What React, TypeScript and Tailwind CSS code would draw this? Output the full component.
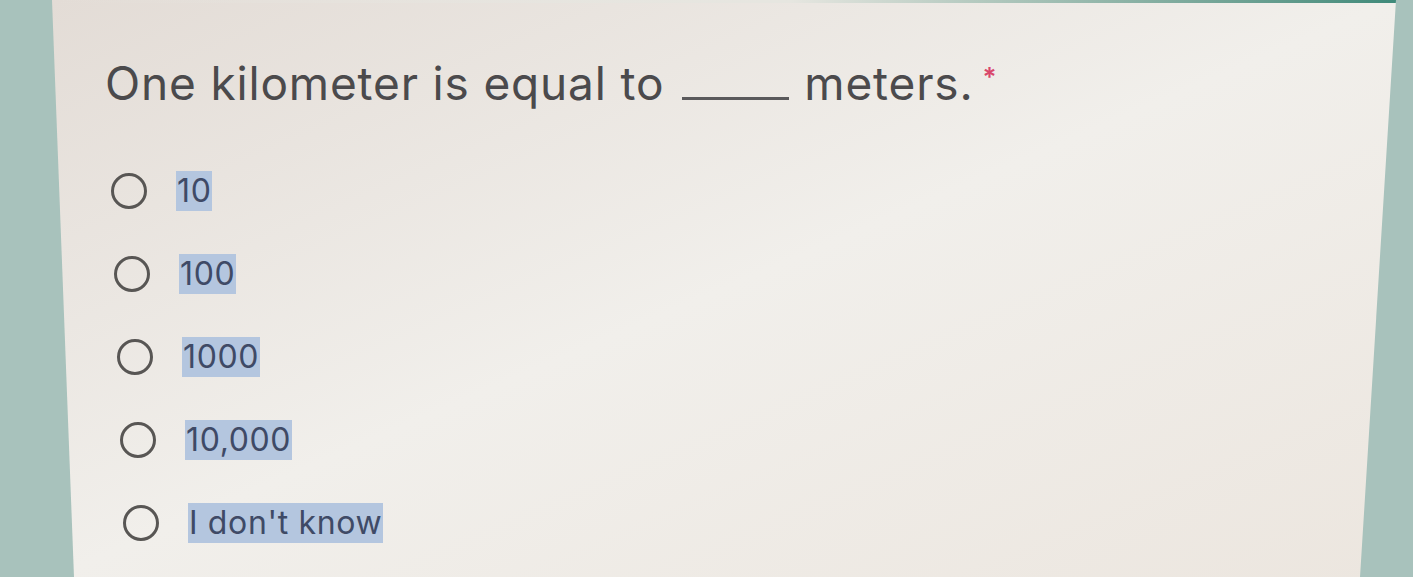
import React from "react";

const options = ["10", "100", "1000", "10,000", "I don't know"];

export default function App() {
  return (
    <div className="relative flex h-[577px] w-full overflow-hidden bg-[#a8c2bc] font-['Inter',sans-serif]">
      <div className="ml-[52px] h-full w-[1344px] bg-gradient-to-br from-[#e3dcd6] via-[#f1efeb] to-[#ece6df] [clip-path:polygon(0_0,100%_0,calc(100%-36px)_100%,22px_100%)]">
        <div className="h-[3px] w-full bg-gradient-to-r from-transparent via-[#e6e6e0] via-55% to-[#3f8a7a]" />
        <div className="pl-[53px] pt-[57px]">
          <h1 className="flex items-baseline text-[46px] font-normal leading-none tracking-[0.018em] text-[#4b4a4c]">
            <span>One kilometer is equal to</span>
            <span className="ml-[18px] mr-[15px] inline-block w-[107px] border-b-[3px] border-[#5a595b]" />
            <span>meters.</span>
            <span className="ml-[9px] mt-[4px] self-start text-[26px] font-semibold text-[#d9476b]">*</span>
          </h1>
          <div className="mt-[67px] flex flex-col gap-[47px] pl-[6px]">
            {options.map((o, i) => (
              <label key={o} className="flex h-[36px] items-center gap-[29px]" style={{ paddingLeft: i * 3 }}>
                <span className="h-[36px] w-[36px] shrink-0 rounded-full border-[3px] border-[#585654]" />
                <span className="bg-[#b4c6df] px-[1px] py-[4px] text-[32px] leading-none tracking-[0.02em] text-[#3f4a66]">{o}</span>
              </label>
            ))}
          </div>
        </div>
      </div>
    </div>
  );
}
